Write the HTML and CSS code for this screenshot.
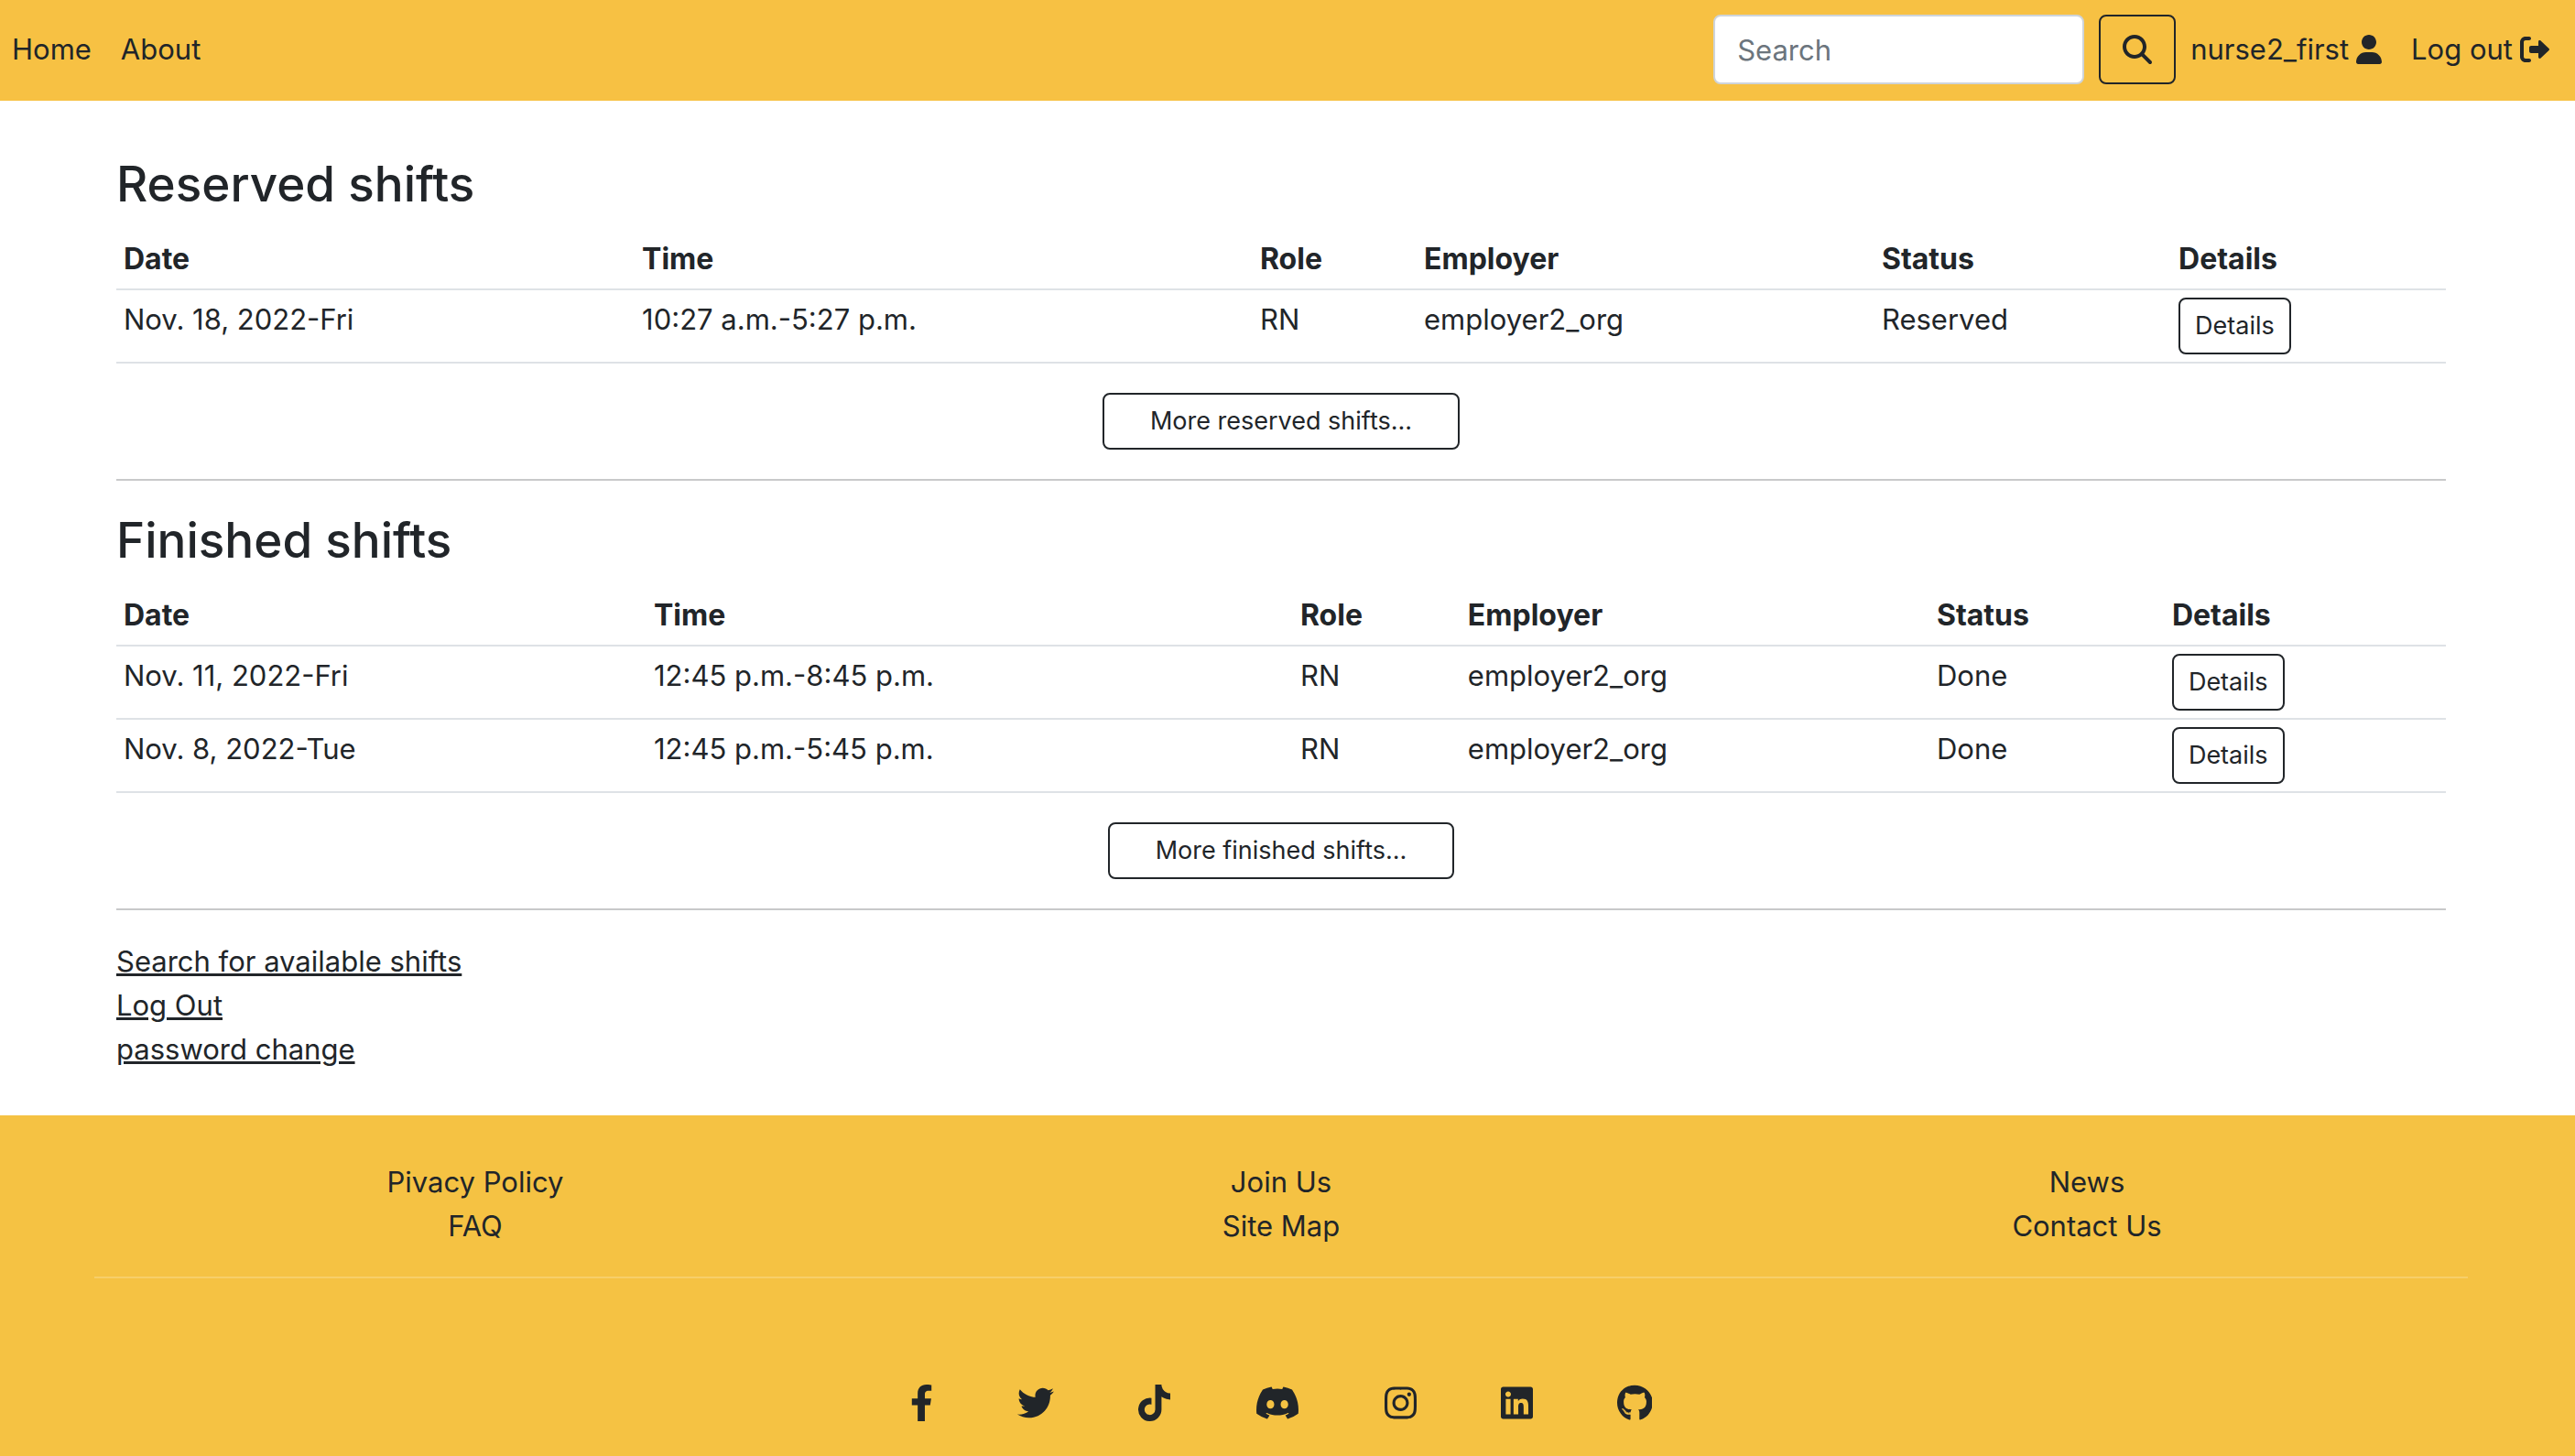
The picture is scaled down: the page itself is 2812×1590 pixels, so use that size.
FILE: index.html
```html
<!DOCTYPE html>
<html lang="en">
<head>
<meta charset="utf-8">
<meta name="viewport" content="width=device-width, initial-scale=1">
<title>Shifts</title>
<link rel="stylesheet" href="styles.css">
</head>
<body>
<header class="navbar">
  <nav class="nav-group">
    <a class="nav-link" href="#">Home</a>
    <a class="nav-link" href="#">About</a>
  </nav>
  <div class="nav-group">
    <form class="search">
      <input class="search-input" type="search" placeholder="Search" aria-label="Search">
      <button class="search-button" type="button" aria-label="Submit search">
        <svg class="icon" viewBox="0 0 512 512"><path d="M416 208c0 45.9-14.9 88.3-40 122.7L502.6 457.4c12.5 12.5 12.5 32.8 0 45.3s-32.8 12.5-45.3 0L330.7 376c-34.4 25.2-76.8 40-122.7 40C93.1 416 0 322.9 0 208S93.1 0 208 0S416 93.1 416 208zM208 352c79.5 0 144-64.5 144-144s-64.5-144-144-144S64 128.5 64 208s64.5 144 144 144z"/></svg>
      </button>
    </form>
    <a class="nav-link" href="#">nurse2_first
      <svg class="icon" viewBox="0 0 448 512"><path d="M224 256c70.7 0 128-57.31 128-128s-57.3-128-128-128C153.3 0 96 57.31 96 128S153.3 256 224 256zM274.7 304H173.3C77.61 304 0 381.6 0 477.3c0 19.14 15.52 34.67 34.66 34.67h378.7C432.5 512 448 496.5 448 477.3C448 381.6 370.4 304 274.7 304z"/></svg></a>
    <a class="nav-link" href="#">Log out
      <svg class="icon" viewBox="0 0 512 512"><path d="M96 480h64C177.7 480 192 465.7 192 448S177.7 416 160 416H96c-17.67 0-32-14.33-32-32V128c0-17.67 14.33-32 32-32h64C177.7 96 192 81.67 192 64S177.7 32 160 32H96C42.98 32 0 74.98 0 128v256C0 437 42.98 480 96 480zM504.8 238.5l-144.1-136c-6.975-6.578-17.2-8.375-26-4.594c-8.803 3.797-14.51 12.47-14.51 22.05l-.0918 72l-128-.001c-17.69 0-32.02 14.33-32.02 32v64c0 17.67 14.34 32 32.02 32l128 .001l.0918 71.1c0 9.578 5.707 18.25 14.51 22.05c8.803 3.781 19.03 1.984 26-4.594l144.1-136C514.4 264.4 514.4 247.6 504.8 238.5z"/></svg></a>
  </div>
</header>

<main class="content">
  <section class="shifts">
    <h3 class="title">Reserved shifts</h3>
    <table class="table reserved">
      <thead>
        <tr><th class="date">Date</th><th class="time">Time</th><th class="role">Role</th><th class="employer">Employer</th><th class="status">Status</th><th>Details</th></tr>
      </thead>
      <tbody>
        <tr><td>Nov. 18, 2022-Fri</td><td>10:27 a.m.-5:27 p.m.</td><td>RN</td><td>employer2_org</td><td>Reserved</td><td><button class="btn" type="button">Details</button></td></tr>
      </tbody>
    </table>
    <button class="btn more" type="button">More reserved shifts...</button>
  </section>
  <hr class="rule">
  <section class="shifts">
    <h3 class="title">Finished shifts</h3>
    <table class="table finished">
      <thead>
        <tr><th class="date">Date</th><th class="time">Time</th><th class="role">Role</th><th class="employer">Employer</th><th class="status">Status</th><th>Details</th></tr>
      </thead>
      <tbody>
        <tr><td>Nov. 11, 2022-Fri</td><td>12:45 p.m.-8:45 p.m.</td><td>RN</td><td>employer2_org</td><td>Done</td><td><button class="btn" type="button">Details</button></td></tr>
        <tr><td>Nov. 8, 2022-Tue</td><td>12:45 p.m.-5:45 p.m.</td><td>RN</td><td>employer2_org</td><td>Done</td><td><button class="btn" type="button">Details</button></td></tr>
      </tbody>
    </table>
    <button class="btn more" type="button">More finished shifts...</button>
  </section>
  <hr class="rule">
  <nav class="links">
    <a href="#">Search for available shifts</a>
    <a href="#">Log Out</a>
    <a href="#">password change</a>
  </nav>
</main>

<footer class="footer">
  <div class="footer-columns">
    <div class="footer-column"><a href="#">Pivacy Policy</a><a href="#">FAQ</a></div>
    <div class="footer-column"><a href="#">Join Us</a><a href="#">Site Map</a></div>
    <div class="footer-column"><a href="#">News</a><a href="#">Contact Us</a></div>
  </div>
  <hr class="footer-rule">
  <div class="social">
    <a href="#" aria-label="Facebook"><svg class="social-icon" viewBox="0 0 320 512"><path d="M279.14 288l14.22-92.66h-88.91v-60.13c0-25.35 12.42-50.06 52.24-50.06h40.42V6.26S260.43 0 225.36 0c-73.22 0-121.08 44.38-121.08 124.72v70.62H22.89V288h81.39v224h100.17V288z"/></svg></a>
    <a href="#" aria-label="Twitter"><svg class="social-icon" viewBox="0 0 512 512"><path d="M459.37 151.716c.325 4.548.325 9.097.325 13.645 0 138.72-105.583 298.558-298.558 298.558-59.452 0-114.68-17.219-161.137-47.106 8.447.974 16.568 1.299 25.34 1.299 49.055 0 94.213-16.568 130.274-44.832-46.132-.975-84.792-31.188-98.112-72.772 6.498.974 12.995 1.624 19.818 1.624 9.421 0 18.843-1.3 27.614-3.573-48.081-9.747-84.143-51.98-84.143-102.985v-1.299c13.969 7.797 30.214 12.67 47.431 13.319-28.264-18.843-46.781-51.005-46.781-87.391 0-19.492 5.197-37.36 14.294-52.954 51.655 63.675 129.3 105.258 216.365 109.807-1.624-7.797-2.599-15.918-2.599-24.04 0-57.828 46.782-104.934 104.934-104.934 30.213 0 57.502 12.67 76.67 33.137 23.715-4.548 46.456-13.32 66.599-25.34-7.798 24.366-24.366 44.833-46.132 57.827 21.117-2.273 41.584-8.122 60.426-16.243-14.292 20.791-32.161 39.308-52.628 54.253z"/></svg></a>
    <a href="#" aria-label="TikTok"><svg class="social-icon" viewBox="0 0 448 512"><path d="M448,209.91a210.06,210.06,0,0,1-122.77-39.25V349.38A162.55,162.55,0,1,1,185,188.31V278.2a74.62,74.62,0,1,0,52.23,71.18V0l88,0a121.18,121.18,0,0,0,1.86,22.17h0A122.18,122.18,0,0,0,381,102.39a121.43,121.43,0,0,0,67,20.14Z"/></svg></a>
    <a href="#" aria-label="Discord"><svg class="social-icon" viewBox="0 0 640 512"><path d="M524.531,69.836a1.5,1.5,0,0,0-.764-.7A485.065,485.065,0,0,0,404.081,32.03a1.816,1.816,0,0,0-1.923.91,337.461,337.461,0,0,0-14.9,30.6,447.848,447.848,0,0,0-134.426,0,309.541,309.541,0,0,0-15.135-30.6,1.89,1.89,0,0,0-1.924-.91A483.689,483.689,0,0,0,116.085,69.137a1.712,1.712,0,0,0-.788.676C39.068,183.651,18.186,294.69,28.43,404.354a2.016,2.016,0,0,0,.765,1.375A487.666,487.666,0,0,0,176.02,479.918a1.9,1.9,0,0,0,2.063-.676A348.2,348.2,0,0,0,208.12,430.4a1.86,1.86,0,0,0-1.019-2.588,321.173,321.173,0,0,1-45.868-21.853,1.885,1.885,0,0,1-.185-3.126c3.082-2.309,6.166-4.711,9.109-7.137a1.819,1.819,0,0,1,1.9-.256c96.229,43.917,200.41,43.917,295.5,0a1.812,1.812,0,0,1,1.924.233c2.944,2.426,6.027,4.851,9.132,7.16a1.884,1.884,0,0,1-.162,3.126,301.407,301.407,0,0,1-45.89,21.83,1.875,1.875,0,0,0-1,2.611,391.055,391.055,0,0,0,30.014,48.815,1.864,1.864,0,0,0,2.063.7A486.048,486.048,0,0,0,610.7,405.729a1.882,1.882,0,0,0,.765-1.352C623.729,277.594,590.933,167.465,524.531,69.836ZM222.491,337.58c-28.972,0-52.844-26.587-52.844-59.239S193.056,219.1,222.491,219.1c29.665,0,53.306,26.82,52.843,59.239C275.334,310.993,251.924,337.58,222.491,337.58Zm195.38,0c-28.971,0-52.843-26.587-52.843-59.239S388.437,219.1,417.871,219.1c29.667,0,53.307,26.82,52.844,59.239C470.715,310.993,447.538,337.58,417.871,337.58Z"/></svg></a>
    <a href="#" aria-label="Instagram"><svg class="social-icon" viewBox="0 0 448 512"><path d="M224.1 141c-63.6 0-114.9 51.3-114.9 114.9s51.3 114.9 114.9 114.9S339 319.5 339 255.9 287.7 141 224.1 141zm0 189.6c-41.1 0-74.7-33.5-74.7-74.7s33.5-74.7 74.7-74.7 74.7 33.5 74.7 74.7-33.6 74.7-74.7 74.7zm146.4-194.3c0 14.9-12 26.8-26.8 26.8-14.9 0-26.8-12-26.8-26.8s12-26.8 26.8-26.8 26.8 12 26.8 26.8zm76.1 27.2c-1.7-35.9-9.9-67.7-36.2-93.9-26.2-26.2-58-34.4-93.9-36.2-37-2.1-147.9-2.1-184.9 0-35.8 1.7-67.6 9.9-93.9 36.1s-34.4 58-36.2 93.9c-2.1 37-2.1 147.9 0 184.9 1.7 35.9 9.9 67.7 36.2 93.9s58 34.4 93.9 36.2c37 2.1 147.9 2.1 184.9 0 35.9-1.7 67.7-9.9 93.9-36.2 26.2-26.2 34.4-58 36.2-93.9 2.1-37 2.1-147.8 0-184.8zM398.8 388c-7.8 19.6-22.9 34.7-42.6 42.6-29.5 11.7-99.5 9-132.1 9s-102.7 2.6-132.1-9c-19.6-7.8-34.7-22.9-42.6-42.6-11.7-29.5-9-99.5-9-132.1s-2.6-102.7 9-132.1c7.8-19.6 22.9-34.7 42.6-42.6 29.5-11.7 99.5-9 132.1-9s102.7-2.6 132.1 9c19.6 7.8 34.7 22.9 42.6 42.6 11.7 29.5 9 99.5 9 132.1s2.7 102.7-9 132.1z"/></svg></a>
    <a href="#" aria-label="LinkedIn"><svg class="social-icon" viewBox="0 0 448 512"><path d="M416 32H31.9C14.3 32 0 46.5 0 64.3v383.4C0 465.5 14.3 480 31.9 480H416c17.6 0 32-14.5 32-32.3V64.3c0-17.8-14.4-32.3-32-32.3zM135.4 416H69V202.2h66.5V416zm-33.2-243c-21.3 0-38.5-17.3-38.5-38.5S80.9 96 102.2 96c21.2 0 38.5 17.3 38.5 38.5 0 21.3-17.2 38.5-38.5 38.5zm282.1 243h-66.4V312c0-24.8-.5-56.7-34.5-56.7-34.6 0-39.9 27-39.9 54.9V416h-66.4V202.2h63.7v29.2h.9c8.9-16.8 30.6-34.5 62.9-34.5 67.2 0 79.7 44.3 79.7 101.9V416z"/></svg></a>
    <a href="#" aria-label="GitHub"><svg class="social-icon" viewBox="0 0 496 512"><path d="M165.9 397.4c0 2-2.3 3.6-5.2 3.6-3.3.3-5.6-1.3-5.6-3.6 0-2 2.3-3.6 5.2-3.6 3-.3 5.6 1.3 5.6 3.6zm-31.1-4.5c-.7 2 1.3 4.3 4.3 4.9 2.6 1 5.6 0 6.2-2s-1.3-4.3-4.3-5.2c-2.6-.7-5.5.3-6.2 2.3zm44.2-1.7c-2.9.7-4.9 2.6-4.6 4.9.3 2 2.9 3.3 5.9 2.6 2.9-.7 4.9-2.6 4.6-4.6-.3-1.9-3-3.2-5.9-2.9zM244.8 8C106.1 8 0 113.3 0 252c0 110.9 69.8 205.8 169.5 239.2 12.8 2.3 17.3-5.6 17.3-12.1 0-6.2-.3-40.4-.3-61.4 0 0-70 15-84.7-29.8 0 0-11.4-29.1-27.8-36.6 0 0-22.9-15.7 1.6-15.4 0 0 24.9 2 38.6 25.8 21.9 38.6 58.6 27.5 72.9 20.9 2.3-16 8.8-27.1 16-33.7-55.9-6.2-112.3-14.3-112.3-110.5 0-27.5 7.6-41.3 23.6-58.9-2.6-6.5-11.1-33.3 2.6-67.9 20.9-6.5 69 27 69 27 20-5.6 41.5-8.5 62.8-8.5s42.8 2.9 62.8 8.5c0 0 48.1-33.6 69-27 13.7 34.7 5.2 61.4 2.6 67.9 16 17.7 25.8 31.5 25.8 58.9 0 96.5-58.9 104.2-114.8 110.5 9.2 7.9 17 22.9 17 46.4 0 33.7-.3 75.4-.3 83.6 0 6.5 4.6 14.4 17.3 12.1C428.2 457.8 496 362.9 496 252 496 113.3 383.5 8 244.8 8zM97.2 352.9c-1.3 1-1 3.3.7 5.2 1.6 1.6 3.9 2.3 5.2 1 1.3-1 1-3.3-.7-5.2-1.6-1.6-3.9-2.3-5.2-1zm-10.8-8.1c-.7 1.3.3 2.9 2.3 3.9 1.6 1 3.6.7 4.3-.7.7-1.3-.3-2.9-2.3-3.9-2-.6-3.6-.3-4.3.7zm32.4 35.6c-1.6 1.3-1 4.3 1.3 6.2 2.3 2.3 5.2 2.6 6.5 1 1.3-1.3.7-4.3-1.3-6.2-2.2-2.3-5.2-2.6-6.5-1zm-11.4-14.7c-1.6 1-1.6 3.6 0 5.9 1.6 2.3 4.3 3.3 5.6 2.3 1.6-1.3 1.6-3.9 0-6.2-1.4-2.3-4-3.3-5.6-2z"/></svg></a>
  </div>
</footer>
</body>
</html>
```
FILE: styles.css
```css
* {
  box-sizing: border-box;
}

html {
  background: #f5c243;
}

body {
  margin: 0;
  background: #fff;
  color: #212529;
  font-family: Inter, "Liberation Sans", sans-serif;
  font-size: 31px;
  line-height: 48px;
}

a {
  color: inherit;
}

/* Top bar */
.navbar {
  display: flex;
  justify-content: space-between;
  padding: 16px 12px 18px 0;
  background: #f7c143;
}

.nav-group,
.search {
  display: flex;
  align-items: center;
}

.search {
  gap: 16px;
}

.nav-link {
  display: flex;
  align-items: center;
  gap: 8px;
  padding: 0 16px;
  text-decoration: none;
}

.nav-link:first-child {
  padding-left: 13px;
}

.icon {
  display: block;
  height: 32px;
  fill: currentColor;
}

.search-input {
  width: 405px;
  height: 76px;
  padding: 12px 24px;
  border: 2px solid #ced4da;
  border-radius: 8px;
  background: #fff;
  color: inherit;
  font: inherit;
}

.search-input::placeholder {
  color: #6c757d;
  opacity: 1;
}

.search-button {
  height: 76px;
  padding: 0 24px;
  border: 2px solid #212529;
  border-radius: 8px;
  background: transparent;
  color: inherit;
}

/* Shift lists */
.content {
  padding: 58px 141px 48px 127px;
}

.shifts {
  display: flex;
  flex-direction: column;
}

.title {
  margin: 0 0 16px;
  font-size: 53px;
  font-weight: 500;
  line-height: 67px;
}

.table {
  width: 100%;
  margin-bottom: 32px;
  border-collapse: separate;
  border-spacing: 0;
  table-layout: fixed;
}

.table th,
.table td {
  padding: 8px;
  border-bottom: 2px solid #dee2e6;
  text-align: left;
  vertical-align: top;
}

.table th {
  font-size: 32px;
  font-weight: 700;
}

.reserved .date { width: 22.25%; }
.reserved .time { width: 26.53%; }
.reserved .role { width: 7.04%; }
.reserved .employer { width: 19.65%; }
.reserved .status { width: 12.74%; }

.finished .date { width: 22.76%; }
.finished .time { width: 27.75%; }
.finished .role { width: 7.19%; }
.finished .employer { width: 20.13%; }
.finished .status { width: 10.1%; }

.btn {
  display: block;
  height: 62px;
  padding: 0 16px;
  border: 2px solid #212529;
  border-radius: 8px;
  background: #fff;
  color: inherit;
  font: inherit;
  font-size: 27px;
}

.more {
  align-self: center;
  padding: 0 50px;
}

.rule {
  height: 2px;
  margin: 32px 0;
  border: 0;
  background: #c8c9ca;
}

.links {
  display: flex;
  flex-direction: column;
  align-items: flex-start;
  text-decoration-thickness: 3px;
}

.links a {
  text-decoration-thickness: 3px;
}

/* Footer */
.footer {
  padding: 49px 117px 38px 103px;
  background: #f5c243;
}

.footer-columns {
  display: grid;
  grid-template-columns: repeat(3, 1fr);
  margin: 0 -24px;
}

.footer-column {
  display: flex;
  flex-direction: column;
  align-items: center;
}

.footer-column a {
  text-decoration: none;
}

.footer-rule {
  height: 2px;
  margin: 31px 0 116px;
  border: 0;
  background: #f7ce69;
}

.social {
  display: flex;
  justify-content: center;
  gap: 92px;
}

.social-icon {
  display: block;
  height: 40px;
  fill: currentColor;
}
```
